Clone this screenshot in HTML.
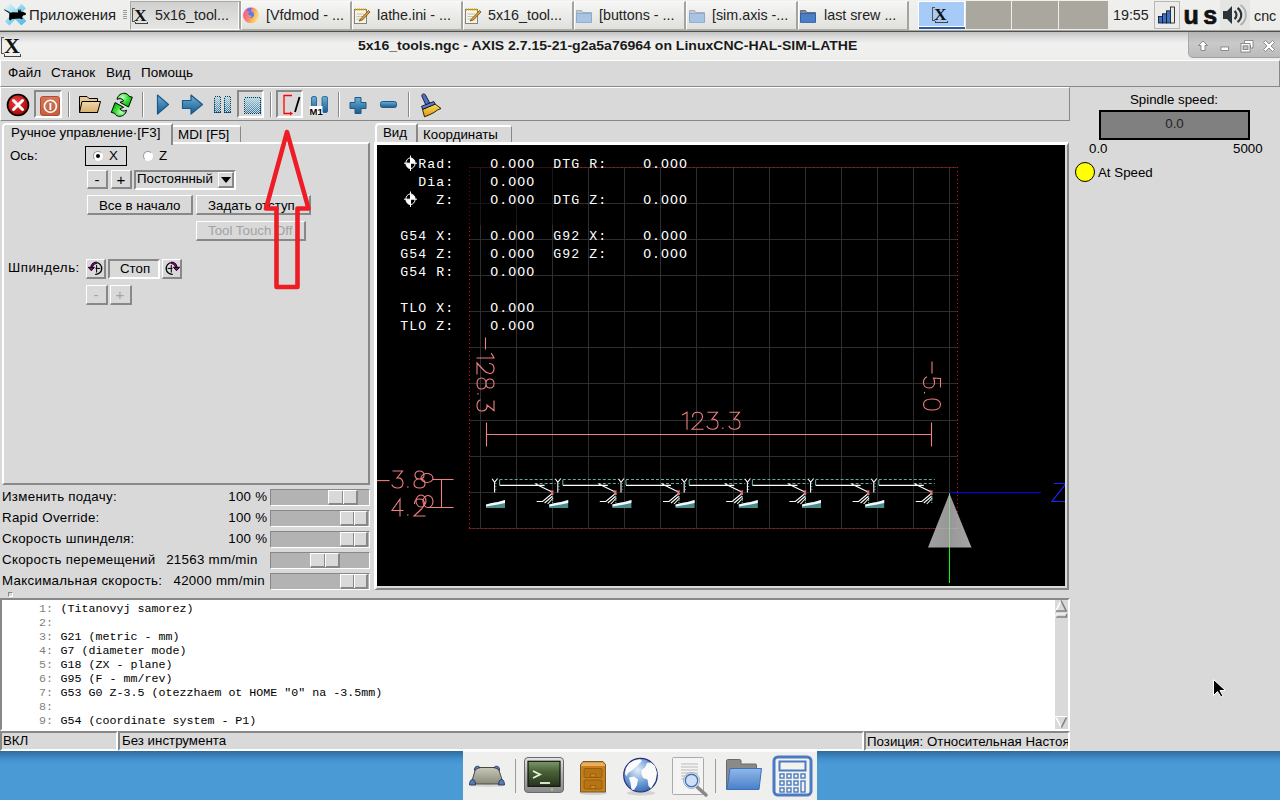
<!DOCTYPE html>
<html><head><meta charset="utf-8">
<style>
*{box-sizing:border-box;margin:0;padding:0}
html,body{width:1280px;height:800px;overflow:hidden;background:#d9d9d9;font-family:"Liberation Sans",sans-serif;font-size:13px;color:#000;position:relative}
.a{position:absolute}
.t{position:absolute;white-space:pre;line-height:1}
/* top panel */
#panel{left:0;top:0;width:1280px;height:32px;background:linear-gradient(#f0f0ef,#ebebea);border-bottom:1px solid #505050;box-shadow:inset 0 -1px 0 #a8a8a2}
.tab{position:absolute;top:1px;height:29px;width:110px;border-style:solid;border-width:1px 2px 1px 1px;border-color:#fafafa #a4a49e #b0b0a8 #fff;background:linear-gradient(#f6f6f5,#e0e0dd)}
.tab .t{top:6px;font-size:14.3px;color:#222}
.ws{position:absolute;top:1px;height:28px;background:#a9a79e}
/* title */
#title{left:0;top:32px;width:1280px;height:28px;background:linear-gradient(#c2c2c2 0,#dcdcdc 5px,#f0f0ef 11px,#eeeeec 100%)}
/* menu */
#menu{left:0;top:60px;width:1280px;height:27px;background:#d9d9d9;border-top:1px solid #fff;border-left:1px solid #fff;border-right:1px solid #888;border-bottom:1px solid #888}
#menu .t{top:5px;font-size:13.5px}
/* toolbar */
#tool{left:0;top:87px;width:1070px;height:34px;border-top:1px solid #fff;border-left:1px solid #fff;border-right:1px solid #888;border-bottom:1px solid #888}
.sep{position:absolute;top:92px;width:2px;height:25px;border-left:1px solid #888;border-right:1px solid #fff}
.sunk{position:absolute;top:90px;height:28px;border:2px solid;border-color:#888 #fff #fff #888}
.raised{border:1px solid;border-color:#fff #888 #888 #fff;background:#d9d9d9}
.sunken{border:1px solid;border-color:#888 #fff #fff #888}
.btn{position:absolute;border:1px solid;border-color:#fff #888 #888 #fff;background:#d9d9d9;text-align:center}
.mono{font-family:"Liberation Mono",monospace}
</style></head><body>

<!-- TOP PANEL -->
<div id="panel" class="a">
<svg class="a" style="left:0;top:0" width="30" height="30" viewBox="0 0 30 30"><defs><linearGradient id="xg" x1="0" y1="0" x2="1" y2="1"><stop offset="0" stop-color="#e8f8fc"/><stop offset="0.5" stop-color="#8cd4f0"/><stop offset="1" stop-color="#48b4e4"/></linearGradient></defs><path d="M4.9 9L10.5 3.4L26.2 21L21.4 25.5Z" fill="url(#xg)"/><path d="M21.4 3.7L25.9 8.2L9.4 25.5L4.9 21.4Z" fill="url(#xg)"/><path d="M4.3 9.2L9.5 12L10 12.8L13 12.3L18 12.5L18.3 10L19 8.8L19.6 11L20.3 8.8L20.9 11.5L23.5 12L26 13.3L25.6 15L23 15.6L22 17.4L23 18.4L21.5 19.2L20 18.6L12 19L10.4 20.6L9 19.6L9.2 16L9.3 13.3L4.2 9.9Z" fill="#000"/></svg>
<div class="t" style="left:29px;top:8px;font-size:14.9px;color:#222">Приложения</div>
<div class="a" style="left:123px;top:10px;width:4px;height:10px;background:repeating-linear-gradient(#999 0 1px,transparent 1px 2px)"></div>
<div class="tab" style="left:130px;width:111px;background:linear-gradient(#d0d0cf,#e6e6e5);border-color:#a8a8a6 #a4a49e #fcfcfc #a8a8a6;box-shadow:inset -1px 0 #fcfcfc"><div class="t" style="left:24px">5x16_tool...</div></div>
<div class="tab" style="left:241px;width:111px"><div class="t" style="left:24px">[Vfdmod - ...</div></div>
<div class="tab" style="left:352px;width:111px"><div class="t" style="left:24px">lathe.ini - ...</div></div>
<div class="tab" style="left:463px;width:111px"><div class="t" style="left:24px">5x16_tool...</div></div>
<div class="tab" style="left:574px;width:112px"><div class="t" style="left:24px">[buttons - ...</div></div>
<div class="tab" style="left:686px;width:112px"><div class="t" style="left:25px">[sim.axis -...</div></div>
<div class="tab" style="left:798px;width:111px"><div class="t" style="left:25px">last srew ...</div></div>
<div class="a" style="left:132px;top:7px;width:20px;height:20px"><div class="a" style="left:0px;top:1px;width:3px;height:14px;border:1px solid #555;border-right:none"></div><div class="t" style="left:2px;top:0px;font-family:'Liberation Serif',serif;font-weight:bold;font-size:17.5px;color:#111">X</div><div class="a" style="left:3px;top:15px;width:13px;height:2px;border:1px solid #444;border-top:none"></div></div><svg class="a" style="left:238px;top:2px" width="26" height="26" viewBox="238 2 26 26"><defs><linearGradient id="ffg" x1="0" y1="0.3" x2="1" y2="0.7"><stop offset="0" stop-color="#f05a90"/><stop offset="0.45" stop-color="#f88a70"/><stop offset="0.7" stop-color="#f8c060"/><stop offset="1" stop-color="#f8e890"/></linearGradient></defs><circle cx="251" cy="15.3" r="8" fill="url(#ffg)"/><path d="M246.5 9.5C248 8 251 7.5 252.5 8.2C251 9 250.5 10.5 251.5 11.5C253 12 254.5 13.5 254 15.5C253.5 17.5 251 18.5 249.5 18C251 17.5 252 16.8 251.5 15.8C250.5 15 248.5 15.5 248 14C248.5 13 249.5 12.5 249.5 12C248.5 11.5 247.5 11 246.5 9.5Z" fill="#5a7ae8"/></svg><svg class="a" style="left:353px;top:7px" width="18" height="18" viewBox="0 0 18 18"><rect x="1.5" y="2.5" width="12" height="14" fill="#f8f4e0" stroke="#777" stroke-width="0.9"/><path d="M2 2.5h11" stroke="#d0a000" stroke-width="2" stroke-dasharray="1.2 0.8"/><path d="M3.5 7H11M3.5 9.5H10M3.5 12H9" stroke="#aaa" stroke-width="0.7"/><path d="M6 14L8 11.5L15.5 3.5L17 5L9.5 13Z" fill="#e8a030" stroke="#6a4a10" stroke-width="0.8"/></svg><svg class="a" style="left:464px;top:7px" width="18" height="18" viewBox="0 0 18 18"><rect x="1.5" y="2.5" width="12" height="14" fill="#f8f4e0" stroke="#777" stroke-width="0.9"/><path d="M2 2.5h11" stroke="#d0a000" stroke-width="2" stroke-dasharray="1.2 0.8"/><path d="M3.5 7H11M3.5 9.5H10M3.5 12H9" stroke="#aaa" stroke-width="0.7"/><path d="M6 14L8 11.5L15.5 3.5L17 5L9.5 13Z" fill="#e8a030" stroke="#6a4a10" stroke-width="0.8"/></svg><svg class="a" style="left:575px;top:6px" width="18" height="18" viewBox="0 0 18 18"><path d="M1.5 4.5V15.5H16.5V6.5H8L6.5 4.5Z" fill="#c0c8d4" stroke="#9aa4b0" stroke-width="0.8"/><path d="M1.5 7.5H16.5V16.5H1.5Z" fill="#a8c4e4" stroke="#88a4c8" stroke-width="0.8"/></svg><svg class="a" style="left:688px;top:6px" width="18" height="18" viewBox="0 0 18 18"><path d="M1.5 4.5V15.5H16.5V6.5H8L6.5 4.5Z" fill="#c0c8d4" stroke="#9aa4b0" stroke-width="0.8"/><path d="M1.5 7.5H16.5V16.5H1.5Z" fill="#a8c4e4" stroke="#88a4c8" stroke-width="0.8"/></svg><svg class="a" style="left:799px;top:6px" width="18" height="18" viewBox="0 0 18 18"><path d="M1.5 4.5V15.5H16.5V6.5H8L6.5 4.5Z" fill="#7f8a9a" stroke="#505a6a" stroke-width="0.8"/><path d="M1.5 7.5H16.5V16.5H1.5Z" fill="#4a7ec8" stroke="#305a9a" stroke-width="0.8"/></svg>
<div class="ws" style="left:918px;width:47px;height:28px;background:#a6cbf6;border:1px solid #fff;border-bottom:none;box-shadow:inset 0 -3px 0 #fff"></div><div class="a" style="left:919px;top:27px;width:46px;height:2px;background:#2a5aa8"></div>
<div class="a" style="left:932px;top:6px;width:20px;height:20px"><div class="a" style="left:0px;top:1px;width:3px;height:14px;border:1px solid #555;border-right:none"></div><div class="t" style="left:2px;top:0px;font-family:'Liberation Serif',serif;font-weight:bold;font-size:17.5px;color:#111">X</div><div class="a" style="left:3px;top:15px;width:13px;height:2px;border:1px solid #444;border-top:none"></div></div>
<div class="ws" style="left:966px;width:45px"></div>
<div class="ws" style="left:1012px;width:46px"></div>
<div class="ws" style="left:1059px;width:49px"></div>
<div class="t" style="left:1113px;top:8px;font-size:14.3px;color:#222">19:55</div>
<div class="a" style="left:1154px;top:1px;width:26px;height:28px;border:1px solid #b8b8b0;background:#ececeb"></div>
<svg class="a" style="left:1154px;top:1px" width="26" height="28"><g stroke="#111" stroke-width="0.8"><rect x="4.4" y="15.5" width="4" height="6.5" fill="#3a70c8"/><rect x="8.4" y="12.8" width="4" height="9.2" fill="#3a70c8"/><rect x="12.4" y="9.8" width="4" height="12.2" fill="#3a70c8"/><rect x="16.4" y="6" width="4" height="16" fill="#e8e8e4"/></g></svg>
<div class="t" style="left:1183.5px;top:3px;font-size:25px;font-weight:bold;color:#111;letter-spacing:4.5px;-webkit-text-stroke:0.7px #111">us</div>
<div class="a" style="left:1220px;top:0;width:30px;height:30px;background:#e5e5e4"></div>
<svg class="a" style="left:1220px;top:0" width="30" height="30"><path d="M3 11H7L12 6V24L7 19H3Z" fill="#2a3338"/><path d="M14.5 11A5 5 0 0 1 14.5 19" stroke="#2a3338" stroke-width="2.2" fill="none"/><path d="M17.5 8A8.5 8.5 0 0 1 17.5 22" stroke="#2a3338" stroke-width="2.2" fill="none"/><path d="M20.5 5A12 12 0 0 1 20.5 25" stroke="#b0b0b0" stroke-width="2" fill="none"/></svg>
<div class="t" style="left:1254px;top:8.5px;font-size:14.3px;color:#222">cnc</div>
</div>

<!-- TITLE -->
<div id="title" class="a">
<div class="a" style="left:0px;top:3px;width:24px;height:24px"><div class="a" style="left:1px;top:2px;width:3px;height:17px;border:1px solid #555;border-right:none"></div><div class="t" style="left:4px;top:0px;font-family:'Liberation Serif',serif;font-weight:bold;font-size:22px;color:#111">X</div><div class="a" style="left:4px;top:19px;width:17px;height:3px;border:1px solid #444;border-top:none"></div></div>
<div class="t" style="left:358px;top:7.3px;font-size:13px;font-weight:bold;color:#1a1a1a;transform:scaleX(1.08);transform-origin:0 0">5x16_tools.ngc - AXIS 2.7.15-21-g2a5a76964 on LinuxCNC-HAL-SIM-LATHE</div>
<div class="a" style="left:1188px;top:0px;width:92px;height:26px;background:linear-gradient(#b4b4b4,#cacaca 45%,#bababa);border-left:1px solid #a8a8a8;border-bottom:1px solid #a0a0a0;border-bottom-left-radius:5px"></div>
<svg class="a" style="left:1188px;top:0px" width="92" height="27" viewBox="1188 32 92 27"><g fill="#fff" stroke="#777" stroke-width="0.8">
<path d="M1203 41L1207.5 45.5H1205V50.5H1201V45.5H1198.5Z"/>
<rect x="1221" y="47" width="7.5" height="3.5"/>
<path d="M1244.5 43.5V40.5H1253V48H1250.5V45.5H1249V43.5Z"/><rect x="1241" y="43.5" width="9" height="8.5"/>
<path d="M1263.5 42.5L1265.5 40.5L1269 44L1272.5 40.5L1274.5 42.5L1271 46L1274.5 49.5L1272.5 51.5L1269 48L1265.5 51.5L1263.5 49.5L1267 46Z"/>
</g><rect x="1243" y="45.8" width="5" height="3.8" fill="#bcbcbc" stroke="#777" stroke-width="0.8"/></svg>
</div>

<!-- MENU -->
<div id="menu" class="a">
  <div class="t" style="left:7px">Файл</div>
  <div class="t" style="left:50px">Станок</div>
  <div class="t" style="left:105px">Вид</div>
  <div class="t" style="left:140px">Помощь</div>
</div>

<!-- TOOLBAR -->
<div id="tool" class="a"></div>

<div class="sunk" style="left:34px;width:28px"></div>
<div class="sunk" style="left:237px;width:27px;height:28px"></div>
<div class="sunk" style="left:276px;width:27px;height:28px"></div>
<div class="sep" style="left:68px"></div>
<div class="sep" style="left:142px"></div>
<div class="sep" style="left:270px"></div>
<div class="sep" style="left:338px"></div>
<div class="sep" style="left:408px"></div>
<svg class="a" style="left:0;top:87px" width="450" height="34" viewBox="0 87 450 34">
<defs>
<radialGradient id="eg" cx="0.4" cy="0.35" r="0.7"><stop offset="0" stop-color="#f04040"/><stop offset="1" stop-color="#a00000"/></radialGradient>
<linearGradient id="pg" x1="0" y1="0" x2="0" y2="1"><stop offset="0" stop-color="#d07858"/><stop offset="1" stop-color="#c06040"/></linearGradient>
<linearGradient id="fg" x1="0" y1="0" x2="0" y2="1"><stop offset="0" stop-color="#f0d8a8"/><stop offset="1" stop-color="#d8b070"/></linearGradient>
<linearGradient id="bg" x1="0" y1="0" x2="0" y2="1"><stop offset="0" stop-color="#6cb0d8"/><stop offset="1" stop-color="#1a5a8a"/></linearGradient>
<pattern id="dots" width="2" height="2" patternUnits="userSpaceOnUse"><rect width="1" height="1" fill="#3a7aaa"/><rect x="1" y="1" width="1" height="1" fill="#3a7aaa"/><rect x="1" y="0" width="1" height="1" fill="#c8e4f4"/><rect x="0" y="1" width="1" height="1" fill="#c8e4f4"/></pattern>
</defs>
<circle cx="18" cy="105" r="10.5" fill="url(#eg)" stroke="#000" stroke-width="1.6"/>
<path d="M13.5 100.5L22.5 109.5M22.5 100.5L13.5 109.5" stroke="#fff" stroke-width="3" stroke-linecap="round"/>
<rect x="40.5" y="96.5" width="19" height="19" rx="2.5" fill="url(#pg)" stroke="#c03a20" stroke-width="0.9"/>
<circle cx="50.4" cy="106.3" r="6" fill="none" stroke="#fff" stroke-width="1.6"/><path d="M50.4 103V110" stroke="#fff" stroke-width="1.8"/>
<path d="M79.5 96.5H87L89 98.5H97.5V112.5H79.5Z" fill="#e8c890" stroke="#000" stroke-width="1"/>
<path d="M79.5 112.5L82 101.5H100.5L97.5 112.5Z" fill="url(#fg)" stroke="#000" stroke-width="1"/>
<defs><radialGradient id="rg" cx="0.35" cy="0.3" r="0.7"><stop offset="0" stop-color="#c8ffc8"/><stop offset="0.5" stop-color="#40e040"/><stop offset="1" stop-color="#00c000"/></radialGradient></defs><path id="ra" d="M117 99.3C117.8 95 121.5 93 125 93.3C127 93.6 128.3 94.8 129 96.3L132.3 97.2L128.5 107L120 102.3L123.6 100.9C122.5 98.6 119.8 98 117 99.3Z" fill="url(#rg)" stroke="#000" stroke-width="1" stroke-linejoin="round"/><path transform="rotate(180 121.8 104.8)" d="M117 99.3C117.8 95 121.5 93 125 93.3C127 93.6 128.3 94.8 129 96.3L132.3 97.2L128.5 107L120 102.3L123.6 100.9C122.5 98.6 119.8 98 117 99.3Z" fill="url(#rg)" stroke="#000" stroke-width="1" stroke-linejoin="round"/>

<path d="M157.5 95L168.5 104.5L157.5 114Z" fill="url(#bg)" stroke="#1a5a8a" stroke-width="1.2" stroke-linejoin="round"/>
<path d="M182.5 100.5H191V95L202.5 104.5L191 114V108.5H182.5Z" fill="url(#bg)" stroke="#1a5a8a" stroke-width="1.2" stroke-linejoin="round"/>
<linearGradient id="dg" x1="0" y1="0" x2="0" y2="1"><stop offset="0" stop-color="#a8dcec"/><stop offset="1" stop-color="#1a6a9a"/></linearGradient>
<pattern id="chk" width="2" height="2" patternUnits="userSpaceOnUse"><rect width="1" height="1" fill="#d9d9d9"/><rect x="1" y="1" width="1" height="1" fill="#d9d9d9"/></pattern>
<g shape-rendering="crispEdges">
<rect x="214" y="96" width="7" height="17" fill="url(#dg)"/><rect x="214" y="96" width="7" height="17" fill="url(#chk)"/>
<rect x="224" y="96" width="7" height="17" fill="url(#dg)"/><rect x="224" y="96" width="7" height="17" fill="url(#chk)"/>
<rect x="244" y="97" width="17" height="17" fill="url(#dg)"/><rect x="244" y="97" width="17" height="17" fill="url(#chk)"/>
<g fill="none" stroke="#0a3a5a" stroke-width="1" stroke-dasharray="1 1">
<rect x="214.5" y="96.5" width="6" height="16"/><rect x="224.5" y="96.5" width="6" height="16"/><rect x="244.5" y="97.5" width="16" height="16"/>
</g></g>
<path d="M292 95.5H284V113.5H290" fill="none" stroke="#f00" stroke-width="1.3"/>
<path d="M290 111.5L293 113.5L290 115.5Z" fill="#f00"/>
<path d="M299.5 97L295 112" stroke="#000" stroke-width="1.8"/>
<rect x="311.5" y="96.5" width="5" height="16" rx="1.5" fill="url(#bg)" stroke="#1a5a8a" stroke-width="0.8"/>
<rect x="322" y="96.5" width="5.5" height="16" rx="1.5" fill="url(#bg)" stroke="#1a5a8a" stroke-width="0.8"/>
<rect x="309.5" y="106" width="13" height="9" fill="#fff"/>
<text x="309.5" y="114.5" font-family="Liberation Sans" font-size="9.5" font-weight="bold" fill="#000">M1</text>
<path d="M355 97.5h6v5h5v6h-5v5h-6v-5h-5v-6h5z" fill="url(#bg)" stroke="#1a5a8a" stroke-width="1" stroke-linejoin="round"/>
<rect x="380.5" y="101.5" width="16" height="6" rx="2" fill="url(#bg)" stroke="#1a5a8a" stroke-width="1"/>
<defs><linearGradient id="brg" x1="0" y1="0" x2="0" y2="1"><stop offset="0" stop-color="#f8e060"/><stop offset="1" stop-color="#e09800"/></linearGradient></defs>
<path d="M421.8 96C421.5 93.8 424.3 93.2 425.3 94.8L430 103.5L426 105.3Z" fill="#5070d0" stroke="#111" stroke-width="0.9" stroke-linejoin="round"/>
<path d="M422.5 109.5L435 104L441 108.5L437.5 110L434 112.5L430 114.5L424.5 116.8Z" fill="url(#brg)" stroke="#111" stroke-width="0.9" stroke-linejoin="round"/>
<path d="M421.5 106.3L433.8 101.5L435.2 104.2L422.6 109.3Z" fill="#5a7ad8" stroke="#111" stroke-width="0.9" stroke-linejoin="round"/>
</svg>


<!-- LEFT NOTEBOOK -->

<div class="a" style="left:2px;top:142px;width:368px;height:343px;border:2px solid;border-color:#fff #888 #888 #fff"></div>
<div class="a" style="left:2px;top:123px;width:171px;height:22px;background:#d9d9d9;border-left:2px solid #fff;border-top:2px solid #fff;border-right:2px solid #888;border-top-left-radius:4px"></div>
<div class="a" style="left:173px;top:125px;width:68px;height:17px;background:#d9d9d9;border-top:2px solid #fff;border-right:1px solid #888;border-top-right-radius:3px"></div>
<div class="t" style="left:11px;top:125.6px;font-size:13.4px">Ручное управление·[F3]</div>
<div class="t" style="left:178px;top:128.3px;font-size:13.4px">MDI [F5]</div>
<div class="t" style="left:10px;top:149.4px;font-size:13.3px">Ось:</div>
<div class="a" style="left:85px;top:146px;width:42px;height:20px;border:1px solid #000"></div>
<div class="a" style="left:93px;top:151px;width:10px;height:10px;border-radius:50%;background:#fff;border:1px solid;border-color:#9a9a9a #fff #fff #9a9a9a"></div>
<div class="a" style="left:96px;top:154px;width:4px;height:4px;border-radius:50%;background:#000"></div>
<div class="t" style="left:109px;top:149px;font-size:13.3px">X</div>
<div class="a" style="left:143px;top:151px;width:10px;height:10px;border-radius:50%;background:#fff;border:1px solid;border-color:#9a9a9a #fff #fff #9a9a9a"></div>
<div class="t" style="left:159px;top:149px;font-size:13.3px">Z</div>
<div class="btn" style="left:87px;top:170px;width:21px;height:19px;border-width:1px 2px 2px 1px"><div class="t" style="left:6.5px;top:1px;font-size:15px">-</div></div>
<div class="btn" style="left:111px;top:170px;width:21px;height:19px;border-width:1px 2px 2px 1px"><div class="t" style="left:4.5px;top:1px;font-size:15px">+</div></div>
<div class="a" style="left:134px;top:170px;width:102px;height:20px;border:2px solid;border-color:#888 #fff #fff #888;background:#d9d9d9"></div>
<div class="t" style="left:137px;top:172.4px;font-size:13.3px">Постоянный</div>
<div class="btn" style="left:218px;top:172px;width:16px;height:16px;border-width:1px 2px 2px 1px"></div>
<svg class="a" style="left:220px;top:176px" width="12" height="8"><path d="M1 1H11L6 7Z" fill="#000"/></svg>
<div class="btn" style="left:87px;top:195px;width:106px;height:20px;border-width:1px 2px 2px 1px"></div>
<div class="t" style="left:99px;top:198.7px;font-size:13.3px">Все в начало</div>
<div class="btn" style="left:196px;top:195px;width:115px;height:20px;border-width:1px 2px 2px 1px"></div>
<div class="t" style="left:208px;top:198.7px;font-size:13.3px">Задать отступ</div>
<div class="btn" style="left:196px;top:221px;width:110px;height:20px;border-width:1px 2px 2px 1px"></div>
<div class="t" style="left:208px;top:224.4px;font-size:13.3px;color:#a3a3a3">Tool Touch Off</div>
<div class="t" style="left:8px;top:260.7px;font-size:13.3px;letter-spacing:0.5px">Шпиндель:</div>
<div class="btn" style="left:86px;top:259px;width:20px;height:20px;border-width:1px 2px 2px 1px"></div>
<svg class="a" style="left:86px;top:259px" width="20" height="20" viewBox="86 259 20 20"><path d="M96.6 262.7A5.7 5.7 0 1 1 95.2 274.3" fill="none" stroke="#000" stroke-width="1.3"/><path d="M96.6 265V272.5M95.5 268.4H100.3" stroke="#000" stroke-width="1"/><path d="M96.8 262.8C94 262.9 92 264.5 91.4 268" fill="none" stroke="#000" stroke-width="2.6"/><path d="M96.8 262.8C94 262.9 92 264.5 91.4 268" fill="none" stroke="#8a008a" stroke-width="1.3"/><path d="M88.2 267.3H94.5L91.3 270.7Z" fill="#8a008a" stroke="#000" stroke-width="0.9" stroke-linejoin="round"/></svg>
<div class="a" style="left:108px;top:259px;width:52px;height:20px;border:2px solid;border-color:#888 #fff #fff #888"></div>
<div class="t" style="left:120px;top:262.4px;font-size:13.3px">Стоп</div>
<div class="btn" style="left:162px;top:259px;width:20px;height:20px;border-width:1px 2px 2px 1px"></div>
<svg class="a" style="left:162px;top:259px" width="20" height="20" viewBox="162 259 20 20"><path d="M171.3 262.7A5.7 5.7 0 1 0 172.7 274.3" fill="none" stroke="#000" stroke-width="1.3"/><path d="M171.3 265V272.5M167.6 268.4H172.4" stroke="#000" stroke-width="1"/><path d="M171.1 262.8C173.9 262.9 175.9 264.5 176.5 268" fill="none" stroke="#000" stroke-width="2.6"/><path d="M171.1 262.8C173.9 262.9 175.9 264.5 176.5 268" fill="none" stroke="#8a008a" stroke-width="1.3"/><path d="M173.4 267.3H179.7L176.5 270.7Z" fill="#8a008a" stroke="#000" stroke-width="0.9" stroke-linejoin="round"/></svg>
<div class="btn" style="left:86px;top:285px;width:22px;height:20px;border-width:1px 2px 2px 1px"><div class="t" style="left:6.5px;top:1px;font-size:15px;color:#a3a3a3">-</div></div>
<div class="btn" style="left:110px;top:285px;width:22px;height:20px;border-width:1px 2px 2px 1px"><div class="t" style="left:4.5px;top:1px;font-size:15px;color:#a3a3a3">+</div></div>
<svg class="a" style="left:255px;top:120px" width="70" height="180"><path d="M32 12L11 88.5H21.5V167H42.5V88.5H53.5Z" fill="none" stroke="#ee1c24" stroke-width="4.6" stroke-linejoin="round"/></svg>


<!-- SLIDERS -->
<div class="t" style="left:2px;top:489.6px;font-size:13.3px;letter-spacing:0.3px">Изменить подачу:</div>
<div class="t" style="left:117.39999999999998px;width:150px;text-align:right;top:489.6px;font-size:13.3px;letter-spacing:0.3px">100 %</div>
<div class="a" style="left:270px;top:489px;width:100px;height:17px;background:#b3b3b3;border:1px solid;border-color:#888 #fff #fff #888"></div>
<div class="a" style="left:328px;top:490px;width:30px;height:15px;background:#d9d9d9;border:1px solid;border-color:#fff #888 #888 #fff;border-width:1px 2px 2px 1px"></div>
<div class="a" style="left:342px;top:491px;width:2px;height:13px;border-left:1px solid #888;border-right:1px solid #fff"></div>
<div class="t" style="left:2px;top:510.6px;font-size:13.3px;letter-spacing:0.3px">Rapid Override:</div>
<div class="t" style="left:117.39999999999998px;width:150px;text-align:right;top:510.6px;font-size:13.3px;letter-spacing:0.3px">100 %</div>
<div class="a" style="left:270px;top:510px;width:100px;height:17px;background:#b3b3b3;border:1px solid;border-color:#888 #fff #fff #888"></div>
<div class="a" style="left:340px;top:511px;width:28px;height:15px;background:#d9d9d9;border:1px solid;border-color:#fff #888 #888 #fff;border-width:1px 2px 2px 1px"></div>
<div class="a" style="left:353px;top:512px;width:2px;height:13px;border-left:1px solid #888;border-right:1px solid #fff"></div>
<div class="t" style="left:2px;top:531.6px;font-size:13.3px;letter-spacing:0.3px">Скорость шпинделя:</div>
<div class="t" style="left:117.39999999999998px;width:150px;text-align:right;top:531.6px;font-size:13.3px;letter-spacing:0.3px">100 %</div>
<div class="a" style="left:270px;top:531px;width:100px;height:17px;background:#b3b3b3;border:1px solid;border-color:#888 #fff #fff #888"></div>
<div class="a" style="left:340px;top:532px;width:28px;height:15px;background:#d9d9d9;border:1px solid;border-color:#fff #888 #888 #fff;border-width:1px 2px 2px 1px"></div>
<div class="a" style="left:353px;top:533px;width:2px;height:13px;border-left:1px solid #888;border-right:1px solid #fff"></div>
<div class="t" style="left:2px;top:552.6px;font-size:13.3px;letter-spacing:0.3px">Скорость перемещений</div>
<div class="t" style="left:107.69999999999999px;width:150px;text-align:right;top:552.6px;font-size:13.3px;letter-spacing:0.3px">21563 mm/min</div>
<div class="a" style="left:270px;top:552px;width:100px;height:17px;background:#b3b3b3;border:1px solid;border-color:#888 #fff #fff #888"></div>
<div class="a" style="left:310px;top:553px;width:30px;height:15px;background:#d9d9d9;border:1px solid;border-color:#fff #888 #888 #fff;border-width:1px 2px 2px 1px"></div>
<div class="a" style="left:324px;top:554px;width:2px;height:13px;border-left:1px solid #888;border-right:1px solid #fff"></div>
<div class="t" style="left:2px;top:573.6px;font-size:13.3px;letter-spacing:0.3px">Максимальная скорость:</div>
<div class="t" style="left:115px;width:150px;text-align:right;top:573.6px;font-size:13.3px;letter-spacing:0.3px">42000 mm/min</div>
<div class="a" style="left:270px;top:573px;width:100px;height:17px;background:#b3b3b3;border:1px solid;border-color:#888 #fff #fff #888"></div>
<div class="a" style="left:340px;top:574px;width:28px;height:15px;background:#d9d9d9;border:1px solid;border-color:#fff #888 #888 #fff;border-width:1px 2px 2px 1px"></div>
<div class="a" style="left:353px;top:575px;width:2px;height:13px;border-left:1px solid #888;border-right:1px solid #fff"></div>
<div class="a" style="left:8px;top:592px;width:5px;height:5px;border:1px solid;border-color:#888 #fff #fff #888"></div>


<!-- CANVAS NOTEBOOK -->

<div class="a" style="left:375px;top:123px;width:43px;height:22px;background:#d9d9d9;border-left:2px solid #fff;border-top:2px solid #fff;border-right:2px solid #888;border-top-left-radius:4px"></div>
<div class="a" style="left:418px;top:125px;width:94px;height:17px;background:#d9d9d9;border-top:2px solid #fff;border-right:1px solid #888;border-top-right-radius:3px"></div>
<div class="t" style="left:383px;top:126.3px;font-size:13.3px">Вид</div>
<div class="t" style="left:423px;top:128.3px;font-size:13.3px">Координаты</div>
<div class="a" style="left:374px;top:142px;width:695px;height:448px;border:3px solid;border-color:#fff #888 #888 #fff;border-width:3px 2px 2px 3px"></div>
<div class="a" style="left:1065px;top:145px;width:1px;height:442px;background:#d9d9d9"></div>
<div class="a" style="left:377px;top:586px;width:689px;height:1px;background:#d9d9d9"></div>
<svg class="a" style="left:377px;top:145px" width="688" height="441" viewBox="377 145 688 441">
<rect x="377" y="145" width="688" height="441" fill="#000"/>
<g stroke="#2e2e2e" stroke-width="1" fill="none" shape-rendering="crispEdges"><path d="M480.5 167V528"/><path d="M516.5 167V528"/><path d="M552.5 167V528"/><path d="M588.5 167V528"/><path d="M624.5 167V528"/><path d="M660.5 167V528"/><path d="M696.5 167V528"/><path d="M733.5 167V528"/><path d="M769.5 167V528"/><path d="M805.5 167V528"/><path d="M841.5 167V528"/><path d="M877.5 167V528"/><path d="M913.5 167V528"/><path d="M949.5 167V528"/><path d="M469 167.5H958"/><path d="M469 203.5H958"/><path d="M469 239.5H958"/><path d="M469 275.5H958"/><path d="M469 311.5H958"/><path d="M469 347.5H958"/><path d="M469 383.5H958"/><path d="M469 420.5H958"/><path d="M469 456.5H958"/><path d="M469 492.5H958"/><path d="M469 528.5H958"/></g>
<g stroke="#ff0000" stroke-width="1" stroke-dasharray="1 3" fill="none" shape-rendering="crispEdges"><path d="M469 167.5H958"/><path d="M469 528.5H958"/><path d="M469.5 167V529"/><path d="M957.5 167V529"/></g><rect x="377" y="145" width="176" height="80" fill="#000" opacity="0.5"/>
<g stroke="#f07f7f" stroke-width="1.1" fill="none" stroke-linecap="square"><path d="M486.5 423V446M486.5 434.5H931.5M931.5 423V446"/><g transform="translate(682 412.2)"><path transform="translate(0 0)" d="M0.5 2.5L5 0V17"/><path transform="translate(10 0)" d="M0.5 4.5C0.5 1.5 2.5 0 5.5 0S10.5 1.5 10.5 4.5C10.5 7 9 8.5 7.5 10L0 17H11"/><path transform="translate(25 0)" d="M1 0H10.5L5 7C8.5 6.5 11 8.5 11 12C11 15.5 8.5 17 5.5 17C3 17 1 16 0 14"/><path transform="translate(40 0)" d="M0.5 16h0.5"/><path transform="translate(47 0)" d="M1 0H10.5L5 7C8.5 6.5 11 8.5 11 12C11 15.5 8.5 17 5.5 17C3 17 1 16 0 14"/></g><g transform="translate(494 338) rotate(90)"><path transform="translate(0 0)" d="M0 8.5H11"/><path transform="translate(15 0)" d="M0.5 2.5L5 0V17"/><path transform="translate(25 0)" d="M0.5 4.5C0.5 1.5 2.5 0 5.5 0S10.5 1.5 10.5 4.5C10.5 7 9 8.5 7.5 10L0 17H11"/><path transform="translate(40 0)" d="M5.5 0C2.5 0 1 1.5 1 4S3 8 5.5 8S10 6.5 10 4S8.5 0 5.5 0ZM5.5 8C2 8 0 10 0 12.5S2 17 5.5 17S11 15 11 12.5S9 8 5.5 8Z"/><path transform="translate(55 0)" d="M0.5 16h0.5"/><path transform="translate(62 0)" d="M1 0H10.5L5 7C8.5 6.5 11 8.5 11 12C11 15.5 8.5 17 5.5 17C3 17 1 16 0 14"/></g><g transform="translate(940.5 362) rotate(90)"><path transform="translate(0 0)" d="M0 8.5H11"/><path transform="translate(15 0)" d="M10 0H1.5L1 7C2 6.5 3.5 6 5.5 6C9 6 11 8.5 11 11.5C11 15 8.5 17 5.5 17C3 17 1 16 0 14"/><path transform="translate(30 0)" d="M0.5 16h0.5"/><path transform="translate(37 0)" d="M5.5 0C1.5 0 0 4 0 8.5S1.5 17 5.5 17S11 13 11 8.5S9.5 0 5.5 0Z"/></g><path d="M377 480.6H389"/><g transform="translate(392 471)"><path transform="translate(0 0)" d="M1 0H10.5L5 7C8.5 6.5 11 8.5 11 12C11 15.5 8.5 17 5.5 17C3 17 1 16 0 14"/><path transform="translate(15 0)" d="M0.5 16h0.5"/><path transform="translate(22 0)" d="M5.5 0C2.5 0 1 1.5 1 4S3 8 5.5 8S10 6.5 10 4S8.5 0 5.5 0ZM5.5 8C2 8 0 10 0 12.5S2 17 5.5 17S11 15 11 12.5S9 8 5.5 8Z"/></g><g transform="translate(392 499)"><path transform="translate(0 0)" d="M8 17V0L0 11.5H11"/><path transform="translate(15 0)" d="M0.5 16h0.5"/><path transform="translate(22 0)" d="M0.5 4.5C0.5 1.5 2.5 0 5.5 0S10.5 1.5 10.5 4.5C10.5 7 9 8.5 7.5 10L0 17H11"/></g><ellipse cx="427" cy="478" rx="6" ry="4.5"/><ellipse cx="421" cy="501" rx="5" ry="6"/><ellipse cx="428" cy="501.5" rx="5" ry="6"/><path d="M433.5 479.5H453M441.5 479.5V507.5M427.5 507.5H453"/></g>
<g fill="none" stroke-width="1.1"><path stroke="#fff" d="M492.1 478.8L494.6 482.3L497.6 478.5M494.6 482.3V492.5"/><path stroke="#5fa0a0" stroke-dasharray="1 2" d="M495.8 483V492"/><path stroke="#66a6a6" stroke-dasharray="3 2" d="M499.6 479.5H555.6"/><path stroke="#66a6a6" d="M499.6 480V485"/><path stroke="#fff" stroke-width="1.3" d="M499.6 485.3H544.6"/><path stroke="#66a6a6" stroke-dasharray="3 2" d="M534.6 483.5H555.6"/><path stroke="#fff" d="M535.6 484L552.1 492M551.6 494L542.6 501.5H536.6M552.6 496L544.6 503M553.1 498L547.6 504"/><path stroke="#66a6a6" stroke-dasharray="2 1" d="M552.6 493V503"/><path stroke="#ff7070" stroke-width="1.4" d="M551.1 490.5L553.1 494.5M553.1 490.5L551.1 494.5"/><path stroke="#fff" d="M555.3 478.8L557.8 482.3L560.8 478.5M557.8 482.3V492.5"/><path stroke="#5fa0a0" stroke-dasharray="1 2" d="M559.0 483V492"/><path stroke="#66a6a6" stroke-dasharray="3 2" d="M562.8 479.5H618.8"/><path stroke="#66a6a6" d="M562.8 480V485"/><path stroke="#fff" stroke-width="1.3" d="M562.8 485.3H607.8"/><path stroke="#66a6a6" stroke-dasharray="3 2" d="M597.8 483.5H618.8"/><path stroke="#fff" d="M598.8 484L615.3 492M614.8 494L605.8 501.5H599.8M615.8 496L607.8 503M616.3 498L610.8 504"/><path stroke="#66a6a6" stroke-dasharray="2 1" d="M615.8 493V503"/><path stroke="#ff7070" stroke-width="1.4" d="M614.3 490.5L616.3 494.5M616.3 490.5L614.3 494.5"/><path stroke="#fff" d="M618.5 478.8L621.0 482.3L624.0 478.5M621.0 482.3V492.5"/><path stroke="#5fa0a0" stroke-dasharray="1 2" d="M622.2 483V492"/><path stroke="#66a6a6" stroke-dasharray="3 2" d="M626.0 479.5H682.0"/><path stroke="#66a6a6" d="M626.0 480V485"/><path stroke="#fff" stroke-width="1.3" d="M626.0 485.3H671.0"/><path stroke="#66a6a6" stroke-dasharray="3 2" d="M661.0 483.5H682.0"/><path stroke="#fff" d="M662.0 484L678.5 492M678.0 494L669.0 501.5H663.0M679.0 496L671.0 503M679.5 498L674.0 504"/><path stroke="#66a6a6" stroke-dasharray="2 1" d="M679.0 493V503"/><path stroke="#ff7070" stroke-width="1.4" d="M677.5 490.5L679.5 494.5M679.5 490.5L677.5 494.5"/><path stroke="#fff" d="M681.7 478.8L684.2 482.3L687.2 478.5M684.2 482.3V492.5"/><path stroke="#5fa0a0" stroke-dasharray="1 2" d="M685.4 483V492"/><path stroke="#66a6a6" stroke-dasharray="3 2" d="M689.2 479.5H745.2"/><path stroke="#66a6a6" d="M689.2 480V485"/><path stroke="#fff" stroke-width="1.3" d="M689.2 485.3H734.2"/><path stroke="#66a6a6" stroke-dasharray="3 2" d="M724.2 483.5H745.2"/><path stroke="#fff" d="M725.2 484L741.7 492M741.2 494L732.2 501.5H726.2M742.2 496L734.2 503M742.7 498L737.2 504"/><path stroke="#66a6a6" stroke-dasharray="2 1" d="M742.2 493V503"/><path stroke="#ff7070" stroke-width="1.4" d="M740.7 490.5L742.7 494.5M742.7 490.5L740.7 494.5"/><path stroke="#fff" d="M744.9 478.8L747.4 482.3L750.4 478.5M747.4 482.3V492.5"/><path stroke="#5fa0a0" stroke-dasharray="1 2" d="M748.6 483V492"/><path stroke="#66a6a6" stroke-dasharray="3 2" d="M752.4 479.5H808.4"/><path stroke="#66a6a6" d="M752.4 480V485"/><path stroke="#fff" stroke-width="1.3" d="M752.4 485.3H797.4"/><path stroke="#66a6a6" stroke-dasharray="3 2" d="M787.4 483.5H808.4"/><path stroke="#fff" d="M788.4 484L804.9 492M804.4 494L795.4 501.5H789.4M805.4 496L797.4 503M805.9 498L800.4 504"/><path stroke="#66a6a6" stroke-dasharray="2 1" d="M805.4 493V503"/><path stroke="#ff7070" stroke-width="1.4" d="M803.9 490.5L805.9 494.5M805.9 490.5L803.9 494.5"/><path stroke="#fff" d="M808.1 478.8L810.6 482.3L813.6 478.5M810.6 482.3V492.5"/><path stroke="#5fa0a0" stroke-dasharray="1 2" d="M811.8 483V492"/><path stroke="#66a6a6" stroke-dasharray="3 2" d="M815.6 479.5H871.6"/><path stroke="#66a6a6" d="M815.6 480V485"/><path stroke="#fff" stroke-width="1.3" d="M815.6 485.3H860.6"/><path stroke="#66a6a6" stroke-dasharray="3 2" d="M850.6 483.5H871.6"/><path stroke="#fff" d="M851.6 484L868.1 492M867.6 494L858.6 501.5H852.6M868.6 496L860.6 503M869.1 498L863.6 504"/><path stroke="#66a6a6" stroke-dasharray="2 1" d="M868.6 493V503"/><path stroke="#ff7070" stroke-width="1.4" d="M867.1 490.5L869.1 494.5M869.1 490.5L867.1 494.5"/><path stroke="#fff" d="M871.3 478.8L873.8 482.3L876.8 478.5M873.8 482.3V492.5"/><path stroke="#5fa0a0" stroke-dasharray="1 2" d="M875.0 483V492"/><path stroke="#66a6a6" stroke-dasharray="3 2" d="M878.8 479.5H934.8"/><path stroke="#66a6a6" d="M878.8 480V485"/><path stroke="#fff" stroke-width="1.3" d="M878.8 485.3H923.8"/><path stroke="#66a6a6" stroke-dasharray="3 2" d="M913.8 483.5H934.8"/><path stroke="#fff" d="M914.8 484L931.3 492M930.8 494L921.8 501.5H915.8M931.8 496L923.8 503M932.3 498L926.8 504"/><path stroke="#66a6a6" stroke-dasharray="2 1" d="M931.8 493V503"/><path stroke="#ff7070" stroke-width="1.4" d="M930.3 490.5L932.3 494.5M932.3 490.5L930.3 494.5"/><path fill="#4a8c8c" stroke="none" d="M486.0 508V504.5L492.0 503L498.0 502L505.0 500V508Z"/><path fill="#f4f8f8" stroke="none" d="M486.0 504.5L492.0 503L498.0 502L505.0 500V503L498.0 504.5L492.0 505.5L486.0 506.5Z"/><path fill="#4a8c8c" stroke="none" d="M549.2 508V504.5L555.2 503L561.2 502L568.2 500V508Z"/><path fill="#f4f8f8" stroke="none" d="M549.2 504.5L555.2 503L561.2 502L568.2 500V503L561.2 504.5L555.2 505.5L549.2 506.5Z"/><path fill="#4a8c8c" stroke="none" d="M612.4 508V504.5L618.4 503L624.4 502L631.4 500V508Z"/><path fill="#f4f8f8" stroke="none" d="M612.4 504.5L618.4 503L624.4 502L631.4 500V503L624.4 504.5L618.4 505.5L612.4 506.5Z"/><path fill="#4a8c8c" stroke="none" d="M675.6 508V504.5L681.6 503L687.6 502L694.6 500V508Z"/><path fill="#f4f8f8" stroke="none" d="M675.6 504.5L681.6 503L687.6 502L694.6 500V503L687.6 504.5L681.6 505.5L675.6 506.5Z"/><path fill="#4a8c8c" stroke="none" d="M738.8 508V504.5L744.8 503L750.8 502L757.8 500V508Z"/><path fill="#f4f8f8" stroke="none" d="M738.8 504.5L744.8 503L750.8 502L757.8 500V503L750.8 504.5L744.8 505.5L738.8 506.5Z"/><path fill="#4a8c8c" stroke="none" d="M802.0 508V504.5L808.0 503L814.0 502L821.0 500V508Z"/><path fill="#f4f8f8" stroke="none" d="M802.0 504.5L808.0 503L814.0 502L821.0 500V503L814.0 504.5L808.0 505.5L802.0 506.5Z"/><path fill="#4a8c8c" stroke="none" d="M865.2 508V504.5L871.2 503L877.2 502L884.2 500V508Z"/><path fill="#f4f8f8" stroke="none" d="M865.2 504.5L871.2 503L877.2 502L884.2 500V503L877.2 504.5L871.2 505.5L865.2 506.5Z"/></g>
<defs><linearGradient id="cg" x1="0" x2="1"><stop offset="0" stop-color="#c8c8c8"/><stop offset="0.5" stop-color="#bdbdbd"/><stop offset="1" stop-color="#d0d0d0"/></linearGradient></defs>

<path d="M950 492.5H1041" stroke="#0000ff" stroke-width="1" shape-rendering="crispEdges"/>
<path d="M949.5 493V583" stroke="#00ff00" stroke-width="1" shape-rendering="crispEdges"/>
<path d="M949.5 493.5L928 547.5H971.5Z" fill="url(#cg)" opacity="0.8"/>
<path d="M1054 483.5H1066M1066 483.5L1052 501.5H1066" stroke="#2020ff" stroke-width="1.2" fill="none"/>
</svg>
<div class="t mono" style="left:400.3px;top:156px;font-size:13.2px;letter-spacing:1.08px;font-weight:normal;line-height:18px;height:18px;color:#fff">&#160;&#160;Rad:&#160;&#160;&#160;&#160;O.OOO&#160;&#160;DTG&#160;R:&#160;&#160;&#160;&#160;O.OOO</div>
<div class="t mono" style="left:400.3px;top:174px;font-size:13.2px;letter-spacing:1.08px;font-weight:normal;line-height:18px;height:18px;color:#fff">&#160;&#160;Dia:&#160;&#160;&#160;&#160;O.OOO</div>
<div class="t mono" style="left:400.3px;top:192px;font-size:13.2px;letter-spacing:1.08px;font-weight:normal;line-height:18px;height:18px;color:#fff">&#160;&#160;&#160;&#160;Z:&#160;&#160;&#160;&#160;O.OOO&#160;&#160;DTG&#160;Z:&#160;&#160;&#160;&#160;O.OOO</div>
<div class="t mono" style="left:400.3px;top:228px;font-size:13.2px;letter-spacing:1.08px;font-weight:normal;line-height:18px;height:18px;color:#fff">G54&#160;X:&#160;&#160;&#160;&#160;O.OOO&#160;&#160;G92&#160;X:&#160;&#160;&#160;&#160;O.OOO</div>
<div class="t mono" style="left:400.3px;top:246px;font-size:13.2px;letter-spacing:1.08px;font-weight:normal;line-height:18px;height:18px;color:#fff">G54&#160;Z:&#160;&#160;&#160;&#160;O.OOO&#160;&#160;G92&#160;Z:&#160;&#160;&#160;&#160;O.OOO</div>
<div class="t mono" style="left:400.3px;top:264px;font-size:13.2px;letter-spacing:1.08px;font-weight:normal;line-height:18px;height:18px;color:#fff">G54&#160;R:&#160;&#160;&#160;&#160;O.OOO</div>
<div class="t mono" style="left:400.3px;top:300px;font-size:13.2px;letter-spacing:1.08px;font-weight:normal;line-height:18px;height:18px;color:#fff">TLO&#160;X:&#160;&#160;&#160;&#160;O.OOO</div>
<div class="t mono" style="left:400.3px;top:318px;font-size:13.2px;letter-spacing:1.08px;font-weight:normal;line-height:18px;height:18px;color:#fff">TLO&#160;Z:&#160;&#160;&#160;&#160;O.OOO</div>
<svg class="a" style="left:402px;top:154px" width="17" height="18" viewBox="402 154 17 18"><ellipse cx="410.5" cy="163.2" rx="4.6" ry="5.3" fill="none" stroke="#fff" stroke-width="1"/><path d="M410.5 163.2V157.9A4.6 5.3 0 0 1 415.1 163.2ZM410.5 163.2V168.5A4.6 5.3 0 0 1 405.9 163.2Z" fill="#fff"/><path d="M410.5 155.5V171M404 163.2H417" stroke="#fff" stroke-width="1"/></svg>
<svg class="a" style="left:402px;top:190px" width="17" height="18" viewBox="402 190 17 18"><ellipse cx="410.5" cy="199.2" rx="4.6" ry="5.3" fill="none" stroke="#fff" stroke-width="1"/><path d="M410.5 199.2V193.9A4.6 5.3 0 0 1 415.1 199.2ZM410.5 199.2V204.5A4.6 5.3 0 0 1 405.9 199.2Z" fill="#fff"/><path d="M410.5 191.5V207M404 199.2H417" stroke="#fff" stroke-width="1"/></svg>



<!-- RIGHT SPINDLE -->

<div class="t" style="left:1130px;top:93px;font-size:13.3px">Spindle speed:</div>
<div class="a" style="left:1099px;top:110px;width:151px;height:30px;background:#808080;border:2px solid #000"></div>
<div class="t" style="left:1099px;width:151px;text-align:center;top:117px;font-size:13.3px;color:#222">0.0</div>
<div class="t" style="left:1089px;top:142px;font-size:13.3px">0.0</div>
<div class="t" style="left:1233px;top:142px;font-size:13.3px">5000</div>
<div class="a" style="left:1075px;top:162px;width:20px;height:20px;border-radius:50%;background:#ff0;border:1px solid #000"></div>
<div class="t" style="left:1098px;top:165.5px;font-size:13.3px">At Speed</div>
<svg class="a" style="left:1209px;top:676px" width="16" height="24"><path d="M4.5 3.5V19.5L8.5 15.5L12 21L14 20L11 14.5H16.5Z" fill="#000" stroke="#fff" stroke-width="1"/></svg>


<!-- CODE -->
<div class="a" style="left:0;top:598px;width:1070px;height:133px;background:#fff;border:2px solid;border-color:#888 #fff #fff #888"></div>
<div class="a" style="left:1055px;top:600px;width:13px;height:129px;background:#d9d9d9"></div>
<svg class="a" style="left:1055px;top:600px" width="13" height="129" viewBox="1055 600 13 129"><path d="M1061 600.5L1056 611" stroke="#fff" stroke-width="1.6" fill="none"/><path d="M1061 600.5L1066.2 611H1056" stroke="#808080" stroke-width="1.6" fill="none"/><path d="M1056 617H1066.5V614" stroke="#808080" stroke-width="1.6" fill="none"/><path d="M1056 617V614H1066" stroke="#fff" stroke-width="1" fill="none"/><path d="M1055 716.5H1067" stroke="#fff" stroke-width="1"/><path d="M1056 717.5L1061.3 727.5" stroke="#fff" stroke-width="1.6" fill="none"/><path d="M1061.3 727.5L1066.5 717.5" stroke="#808080" stroke-width="1.6" fill="none"/></svg>
<div class="t mono" style="left:39px;top:601.8px;font-size:11.67px;line-height:14px;color:#7f7f7f">1:</div>
<div class="t mono" style="left:60.5px;top:601.8px;font-size:11.67px;line-height:14px">(Titanovyj samorez)</div>
<div class="t mono" style="left:39px;top:615.8px;font-size:11.67px;line-height:14px;color:#7f7f7f">2:</div>
<div class="t mono" style="left:39px;top:629.8px;font-size:11.67px;line-height:14px;color:#7f7f7f">3:</div>
<div class="t mono" style="left:60.5px;top:629.8px;font-size:11.67px;line-height:14px">G21 (metric - mm)</div>
<div class="t mono" style="left:39px;top:643.8px;font-size:11.67px;line-height:14px;color:#7f7f7f">4:</div>
<div class="t mono" style="left:60.5px;top:643.8px;font-size:11.67px;line-height:14px">G7 (diameter mode)</div>
<div class="t mono" style="left:39px;top:657.8px;font-size:11.67px;line-height:14px;color:#7f7f7f">5:</div>
<div class="t mono" style="left:60.5px;top:657.8px;font-size:11.67px;line-height:14px">G18 (ZX - plane)</div>
<div class="t mono" style="left:39px;top:671.8px;font-size:11.67px;line-height:14px;color:#7f7f7f">6:</div>
<div class="t mono" style="left:60.5px;top:671.8px;font-size:11.67px;line-height:14px">G95 (F - mm/rev)</div>
<div class="t mono" style="left:39px;top:685.8px;font-size:11.67px;line-height:14px;color:#7f7f7f">7:</div>
<div class="t mono" style="left:60.5px;top:685.8px;font-size:11.67px;line-height:14px">G53 G0 Z-3.5 (otezzhaem ot HOME "0" na -3.5mm)</div>
<div class="t mono" style="left:39px;top:699.8px;font-size:11.67px;line-height:14px;color:#7f7f7f">8:</div>
<div class="t mono" style="left:39px;top:713.8px;font-size:11.67px;line-height:14px;color:#7f7f7f">9:</div>
<div class="t mono" style="left:60.5px;top:713.8px;font-size:11.67px;line-height:14px">G54 (coordinate system - P1)</div>


<!-- STATUS -->
<div class="a" style="left:0;top:731px;width:118px;height:20px;border:2px solid;border-color:#888 #fff #fff #888"></div>
<div class="a" style="left:118px;top:731px;width:746px;height:20px;border:2px solid;border-color:#888 #fff #fff #888"></div>
<div class="a" style="left:864px;top:731px;width:206px;height:20px;border:2px solid;border-color:#888 #fff #fff #888;overflow:hidden"><div class="t" style="left:1px;top:1.6px;font-size:13.3px">Позиция: Относительная Настоящая</div></div>
<div class="t" style="left:3px;top:734px;font-size:13.3px">ВКЛ</div>
<div class="t" style="left:122px;top:734px;font-size:13.3px">Без инструмента</div>

<!-- DESKTOP/DOCK -->

<div class="a" style="left:0;top:751px;width:1280px;height:49px;background:linear-gradient(#2e6c9e,#4390cc 8px,#4a9ad6 14px,#4a9ad6)"></div>
<div class="a" style="left:463px;top:750px;width:354px;height:50px;background:#efefee;border-top:2px solid #fbfbfb"></div>
<svg class="a" style="left:463px;top:750px" width="354" height="50" viewBox="463 750 354 50">
<defs>
<linearGradient id="trg" x1="0" y1="0" x2="0" y2="1"><stop offset="0" stop-color="#c8c8b8"/><stop offset="1" stop-color="#8a8a7a"/></linearGradient>
<radialGradient id="glg" cx="0.42" cy="0.35" r="0.75"><stop offset="0" stop-color="#e0eefa"/><stop offset="0.55" stop-color="#6a9ad4"/><stop offset="1" stop-color="#2a5aa8"/></radialGradient>
<linearGradient id="cab" x1="0" y1="0" x2="0" y2="1"><stop offset="0" stop-color="#f0b040"/><stop offset="1" stop-color="#c07810"/></linearGradient>
<linearGradient id="fold" x1="0" y1="0" x2="0" y2="1"><stop offset="0" stop-color="#90b8e8"/><stop offset="1" stop-color="#4a80c8"/></linearGradient>
</defs>
<ellipse cx="487" cy="785.5" rx="17" ry="1.5" fill="#000" opacity="0.1"/>
<path d="M476 767.5H498L503.5 784H471Z" fill="url(#trg)" stroke="#4a4a44" stroke-width="1"/>
<g fill="#5a7ab8" stroke="#1a2a50" stroke-width="0.8"><path d="M474.5 770.5C474 768 475.5 766.2 477.5 766.2C479 766.2 480 767 480 767.8C478 768 476 769 474.5 770.5Z"/><path d="M499.5 770.5C500 768 498.5 766.2 496.5 766.2C495 766.2 494 767 494 767.8C496 768 498 769 499.5 770.5Z"/><path d="M469.5 785C469.5 782 470.5 779.5 472.5 779.5C474.5 779.5 475.5 782 475.5 785Z"/><path d="M498.5 785C498.5 782 499.5 779.5 501.5 779.5C503.5 779.5 504.5 782 504.5 785Z"/></g>
<path d="M515.5 759V793" stroke="#9c9c94" stroke-width="1"/>
<defs><linearGradient id="bez" x1="0" y1="0" x2="0" y2="1"><stop offset="0" stop-color="#e4e4e4"/><stop offset="0.5" stop-color="#b0b0b0"/><stop offset="1" stop-color="#8a8a8a"/></linearGradient>
<linearGradient id="scr" x1="0" y1="0" x2="0" y2="1"><stop offset="0" stop-color="#7a9a68"/><stop offset="0.4" stop-color="#4a6238"/><stop offset="1" stop-color="#26341c"/></linearGradient></defs>
<rect x="524.5" y="757.5" width="39" height="35" rx="3.5" fill="url(#bez)" stroke="#6a6a6a"/>
<rect x="528" y="761.3" width="32" height="25" fill="url(#scr)" stroke="#111" stroke-width="1.2"/>
<path d="M533 771L540 774.5L533 778" stroke="#e8f4e0" stroke-width="1.8" fill="none"/><path d="M540 783H550" stroke="#e8f4e0" stroke-width="1.8"/>
<rect x="551" y="788.5" width="2" height="2" fill="#90e060"/>
<ellipse cx="593" cy="793" rx="14" ry="2" fill="#000" opacity="0.12"/>
<path d="M583 761.5H603L605.5 764.5V792H580.5V764.5Z" fill="#c8801a" stroke="#6a5020" stroke-width="0.9"/>
<path d="M583 762.5H603L605 765V766H581V765Z" fill="#e8b060"/>
<rect x="584" y="768.5" width="18" height="9" rx="1" fill="#b87414" stroke="#8a5810" stroke-width="0.8"/><rect x="584" y="780" width="18" height="9" rx="1" fill="#b87414" stroke="#8a5810" stroke-width="0.8"/>
<rect x="590.5" y="774" width="5" height="3" fill="#d08a20" stroke="#8a5810" stroke-width="0.7"/><rect x="590.5" y="785.5" width="5" height="3" fill="#d08a20" stroke="#8a5810" stroke-width="0.7"/>
<ellipse cx="641" cy="793" rx="14" ry="2.5" fill="#000" opacity="0.12"/>
<circle cx="640.5" cy="775.2" r="16.8" fill="url(#glg)" stroke="#2a2a7a" stroke-width="1.1"/>
<g fill="#fbfbfb">
<path d="M625 774L626 768L629 763.5L634 760.5L640 759.3L642 761L639 764L636 767L632 770.5L628 773L626.5 776Z"/>
<path d="M629 777.5L634 776.5L638 779.5L637 785L634 790L631.5 789.5L630.5 783Z"/>
<path d="M641.5 770L645 767.5L647 763L651 762.5L655 766L657 773L655.5 781L651 788.5L648.5 786L647.5 779.5L643 778L641.5 774Z"/>
</g>
<rect x="672.5" y="757.5" width="31" height="37" rx="1" fill="#f4f4f4" stroke="#aaa"/>
<path d="M681 764H698M681 767H698M681 770H698M681 773H698M681 776H698M681 779H698" stroke="#bbb"/>
<path d="M696 786L706 795" stroke="#888" stroke-width="3.5" stroke-linecap="round"/><circle cx="691.5" cy="780.5" r="8" fill="#fff" stroke="#aaa" stroke-width="1"/><circle cx="691.5" cy="780.5" r="6.2" fill="#d0e0f4" stroke="#3a70c0" stroke-width="1.4"/>
<path d="M715.5 759V793" stroke="#9c9c94" stroke-width="1"/>
<path d="M726.5 789.5V761C726.5 760 727 759.5 728 759.5H739.5C740.5 759.5 741 760 741 761V764H755.5C756 764 756.5 764.5 756.5 765V789.5Z" fill="#8a8a8a" stroke="#6a6a6a"/><path d="M727 789.5L730 768.5H761.5L759 789.5Z" fill="url(#fold)" stroke="#3a70c0"/>
<rect x="774" y="757" width="37" height="38" rx="4" fill="#f2f2ee" stroke="#4a7ac2" stroke-width="3"/>
<rect x="779.5" y="761.5" width="26" height="9" fill="none" stroke="#4a7ac2" stroke-width="2"/>
<g fill="none" stroke="#4a7ac2" stroke-width="1.4">
<rect x="780" y="774" width="4" height="4"/><rect x="787" y="774" width="4" height="4"/><rect x="794" y="774" width="4" height="4"/><rect x="801" y="774" width="4" height="4"/>
<rect x="780" y="781" width="4" height="4"/><rect x="787" y="781" width="4" height="4"/><rect x="794" y="781" width="4" height="4"/>
<rect x="780" y="788" width="4" height="4"/><rect x="787" y="788" width="4" height="4"/><rect x="794" y="788" width="4" height="4"/><rect x="801" y="781" width="4" height="11"/>
</g>
</svg>


</body></html>
